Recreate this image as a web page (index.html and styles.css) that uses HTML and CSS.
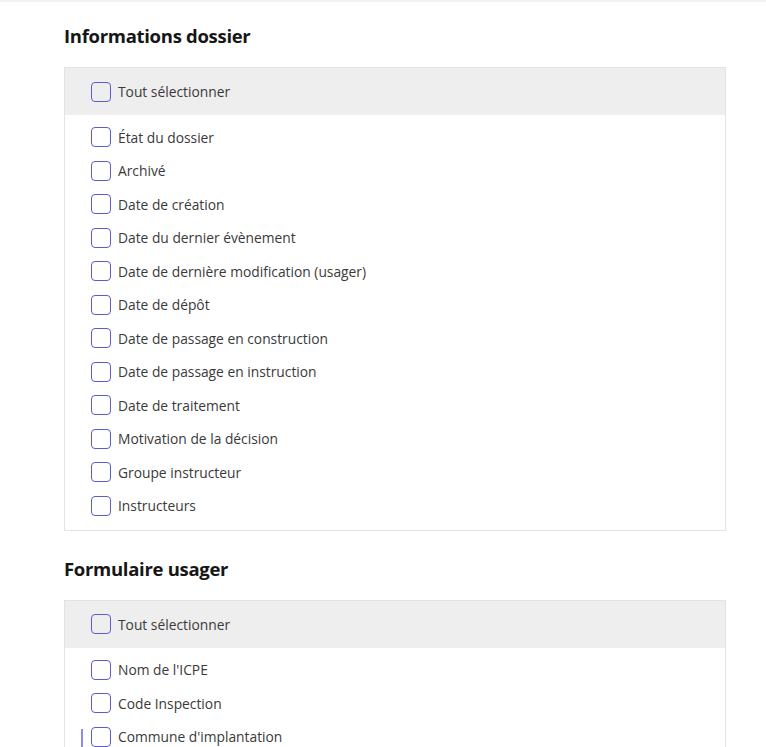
FILE: index.html
```html
<!DOCTYPE html>
<html lang="fr">
<head>
<meta charset="utf-8">
<title>Export</title>
<link rel="stylesheet" href="styles.css">
</head>
<body>
<div class="topline"></div>
<main class="page">
  <section class="section">
    <h2 class="section-title">Informations dossier</h2>
    <div class="panel">
      <label class="row row-all"><span class="cb"></span><span class="lbl">Tout sélectionner</span></label>
      <div class="list">
        <label class="row"><span class="cb"></span><span class="lbl">État du dossier</span></label>
        <label class="row"><span class="cb"></span><span class="lbl">Archivé</span></label>
        <label class="row"><span class="cb"></span><span class="lbl">Date de création</span></label>
        <label class="row"><span class="cb"></span><span class="lbl">Date du dernier évènement</span></label>
        <label class="row"><span class="cb"></span><span class="lbl">Date de dernière modification (usager)</span></label>
        <label class="row"><span class="cb"></span><span class="lbl">Date de dépôt</span></label>
        <label class="row"><span class="cb"></span><span class="lbl">Date de passage en construction</span></label>
        <label class="row"><span class="cb"></span><span class="lbl">Date de passage en instruction</span></label>
        <label class="row"><span class="cb"></span><span class="lbl">Date de traitement</span></label>
        <label class="row"><span class="cb"></span><span class="lbl">Motivation de la décision</span></label>
        <label class="row"><span class="cb"></span><span class="lbl">Groupe instructeur</span></label>
        <label class="row"><span class="cb"></span><span class="lbl">Instructeurs</span></label>
      </div>
    </div>
  </section>
  <section class="section">
    <h2 class="section-title">Formulaire usager</h2>
    <div class="panel">
      <label class="row row-all"><span class="cb"></span><span class="lbl">Tout sélectionner</span></label>
      <div class="list">
        <label class="row"><span class="cb"></span><span class="lbl">Nom de l'ICPE</span></label>
        <label class="row"><span class="cb"></span><span class="lbl">Code Inspection</span></label>
        <label class="row row-drag"><span class="cb"></span><span class="lbl">Commune d'implantation</span></label>
      </div>
    </div>
  </section>
</main>
</body>
</html>
```

FILE: styles.css
```css
* { box-sizing: border-box; }
html, body { margin: 0; padding: 0; background: #fff; }
body {
  font-family: "Open Sans", "Liberation Sans", sans-serif;
  color: #3a3a3a;
  overflow: hidden;
  height: 747px;
}
.topline { height: 2px; background: #f1f1f6; }
.page { width: 662px; margin-left: 64px; padding-top: 20px; }
.section + .section { margin-top: 24px; }
.section-title {
  margin: 0 0 17px;
  font-size: 18.5px;
  line-height: 28px;
  font-weight: 700;
  color: #161616;
  letter-spacing: -0.3px;
}
.panel { border: 1px solid #e3e3e3; }
.row {
  display: flex;
  align-items: center;
  gap: 7px;
  height: 24px;
  padding-left: 26px;
  font-size: 13.8px;
  position: relative;
}
.row-all { height: 47px; background: #eeeeee; }
.list { display: flex; flex-direction: column; gap: 9.5px; padding: 10px 0 12px; }
.cb {
  width: 20px; height: 20px; flex: none;
  border: 1px solid #5c5cd0;
  border-radius: 4px;
  background: #fff;
}
.row-all .cb { background: transparent; }
.row-drag::before {
  content: "";
  position: absolute;
  left: 16px; top: 4px; bottom: -16px;
  width: 2px;
  background: #8b8bf3;
}
```
